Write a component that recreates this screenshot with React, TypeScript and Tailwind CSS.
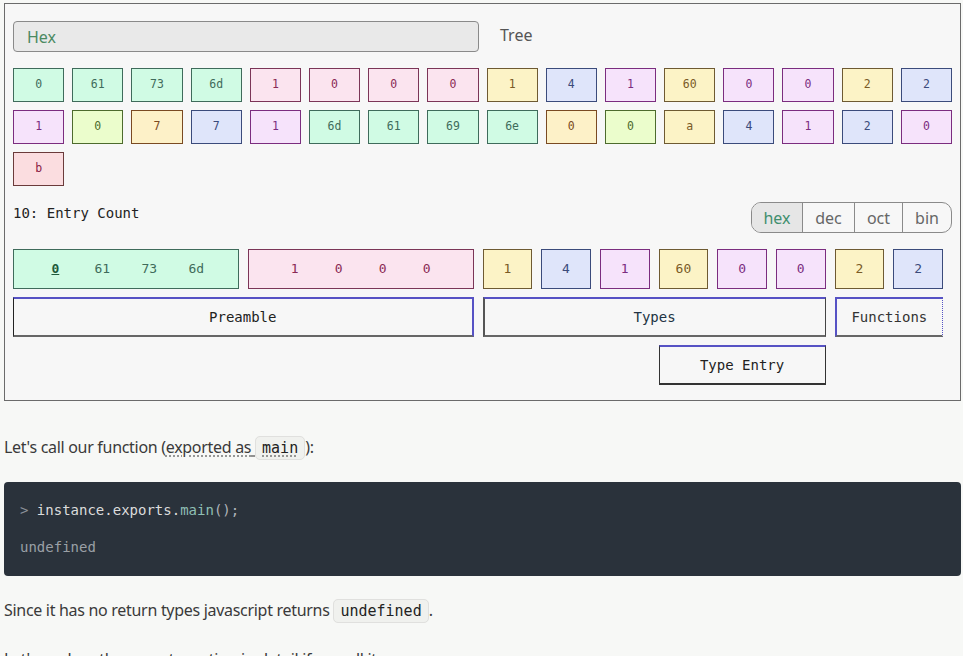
import React from "react";

type C = "g" | "p" | "y" | "b" | "v" | "l" | "o" | "r";

const styles: Record<C, string> = {
  g: "bg-[#d0fbe4] border-[#3f6b5b] text-[#3f6b5b]",
  p: "bg-[#fbe4ef] border-[#7b3557] text-[#8a2a55]",
  y: "bg-[#fcf3c6] border-[#6e5a32] text-[#7a5a26]",
  b: "bg-[#dfe5fa] border-[#3b4b7b] text-[#3b4b7b]",
  v: "bg-[#f6e3fb] border-[#7b2d7f] text-[#7b2d7f]",
  l: "bg-[#ebfdcc] border-[#4d6b2d] text-[#4d6b2d]",
  o: "bg-[#fdf1c8] border-[#7a4a22] text-[#7a4a22]",
  r: "bg-[#fbdde0] border-[#6b3b3b] text-[#8a2045]",
};

const top: [string, C][] = [
  ["0", "g"], ["61", "g"], ["73", "g"], ["6d", "g"],
  ["1", "p"], ["0", "p"], ["0", "p"], ["0", "p"],
  ["1", "y"], ["4", "b"], ["1", "v"], ["60", "y"],
  ["0", "v"], ["0", "v"], ["2", "y"], ["2", "b"],
  ["1", "v"], ["0", "l"], ["7", "o"], ["7", "b"],
  ["1", "v"], ["6d", "g"], ["61", "g"], ["69", "g"],
  ["6e", "g"], ["0", "o"], ["0", "l"], ["a", "y"],
  ["4", "b"], ["1", "v"], ["2", "b"], ["0", "v"],
  ["b", "r"],
];

const singles: [string, C][] = [
  ["1", "y"], ["4", "b"], ["1", "v"], ["60", "y"],
  ["0", "v"], ["0", "v"], ["2", "y"], ["2", "b"],
];

const mono = "font-['DejaVu_Sans_Mono',monospace]";
const sans = "font-['Noto_Sans','Open_Sans',sans-serif]";
const inlineCode = `${mono} text-[15px] text-[#222] bg-[#f0f1ee] border border-[#e0e0de] rounded-[5px] px-[6px] py-[2px] tracking-normal`;

export default function App() {
  return (
    <div className={`min-h-[656px] bg-[#f7f8f6] px-[4px] pt-[3px] ${sans} overflow-hidden`}>
      <div className="w-[957px] border border-[#6b6b6b] bg-[#f7f7f7] px-[8px] pt-[17px] pb-[15px]">
        <div className="flex items-center">
          <div className="w-[466px] h-[31px] rounded-[4px] border border-[#8a8a8a] bg-[#e9e9e9] flex items-center pl-[13px] text-[16px] text-[#4b8a62]">
            Hex
          </div>
          <div className="ml-[21px] -mt-[3px] text-[16px] text-[#555]">Tree</div>
        </div>

        <div className="mt-[16px] grid grid-cols-16 gap-2">
          {top.map(([t, c], i) => (
            <div
              key={i}
              className={`h-[34px] border flex items-center justify-center text-[11.5px] ${mono} ${styles[c]}`}
            >
              {t}
            </div>
          ))}
        </div>

        <div className="mt-[16px] flex items-start justify-between">
          <div className={`${mono} text-[14px] text-[#222] mt-[1px]`}>10: Entry Count</div>
          <div className="flex h-[31px] rounded-[10px] border border-[#8a8a8a] overflow-hidden text-[16px] text-[#666]">
            <div className="w-[50px] flex items-center justify-center bg-[#e6e6e6] text-[#3f8f6e]">hex</div>
            <div className="w-[52px] flex items-center justify-center border-l border-[#8a8a8a]">dec</div>
            <div className="w-[48px] flex items-center justify-center border-l border-[#8a8a8a]">oct</div>
            <div className="w-[49px] flex items-center justify-center border-l border-[#8a8a8a]">bin</div>
          </div>
        </div>

        <div className={`mt-[16px] w-[930px] grid grid-cols-16 gap-x-[9px] gap-y-2 ${mono} text-[13px]`}>
          <div className={`col-span-4 h-[40px] border flex items-center justify-center ${styles.g}`}>
            <span className="w-[47px] text-center font-bold underline text-[#1f5a3c]">0</span>
            <span className="w-[47px] text-center">61</span>
            <span className="w-[47px] text-center">73</span>
            <span className="w-[47px] text-center">6d</span>
          </div>
          <div className={`col-span-4 h-[40px] border flex items-center justify-center ${styles.p}`}>
            <span className="w-[44px] text-center">1</span>
            <span className="w-[44px] text-center">0</span>
            <span className="w-[44px] text-center">0</span>
            <span className="w-[44px] text-center">0</span>
          </div>
          {singles.map(([t, c], i) => (
            <div key={i} className={`h-[40px] border flex items-center justify-center ${styles[c]}`}>
              {t}
            </div>
          ))}

          <div className="col-span-8 h-[40px] border-t-2 border-r-2 border-l border-b-2 border-t-[#5652c4] border-r-[#5652c4] border-l-[#222] border-b-[#666] flex items-center justify-center text-[14px] text-[#222]">
            Preamble
          </div>
          <div className="col-span-6 h-[40px] border-t-2 border-r border-l-2 border-b-2 border-t-[#5652c4] border-r-[#444] border-l-[#555] border-b-[#666] flex items-center justify-center text-[14px] text-[#234]">
            Types
          </div>
          <div className="col-span-2 h-[40px] border-t-2 border-l-2 border-r border-b-2 border-t-[#5652c4] border-l-[#5652c4] border-r-[#5652c4] [border-right-style:dotted] border-b-[#666] flex items-center justify-center text-[14px] text-[#333]">
            Functions
          </div>

          <div className="col-start-12 col-span-3 h-[40px] border-t-2 border-r border-l border-b-2 border-t-[#5652c4] border-r-[#333] border-l-[#333] border-b-[#333] flex items-center justify-center text-[14px] text-[#222]">
            Type Entry
          </div>
        </div>
      </div>

      <p className="mt-[34px] text-[16px] leading-[24px] text-[#3a3a3a] tracking-[-0.3px]">
        Let's call our function (
        <span className="underline decoration-dotted decoration-[#777] underline-offset-[3px]">
          exported as{" "}
          <code className={inlineCode}>main</code>
        </span>
        ):
      </p>

      <div className={`mt-[22px] w-[957px] h-[94px] rounded-[4px] bg-[#2a323b] ${mono} text-[14px] pl-[16px] pt-[18px]`}>
        <div className="leading-[20px]">
          <span className="text-[#8a9099]">&gt; </span>
          <span className="text-[#dcdcdc]">instance.exports.</span>
          <span className="text-[#8fbfb4]">main</span>
          <span className="text-[#b0b4ba]">();</span>
        </div>
        <div className="mt-[17px] leading-[20px] text-[#9aa0a6]">undefined</div>
      </div>

      <p className="mt-[22px] text-[16px] leading-[24px] text-[#3a3a3a] tracking-[-0.3px]">
        Since it has no return types javascript returns{" "}
        <code className={inlineCode}>undefined</code>
        .
      </p>

      <p className="mt-[24px] text-[16px] leading-[24px] text-[#3a3a3a] tracking-[-0.3px]">
        Let's analyse the exports section in detail if we call it:
      </p>
    </div>
  );
}
